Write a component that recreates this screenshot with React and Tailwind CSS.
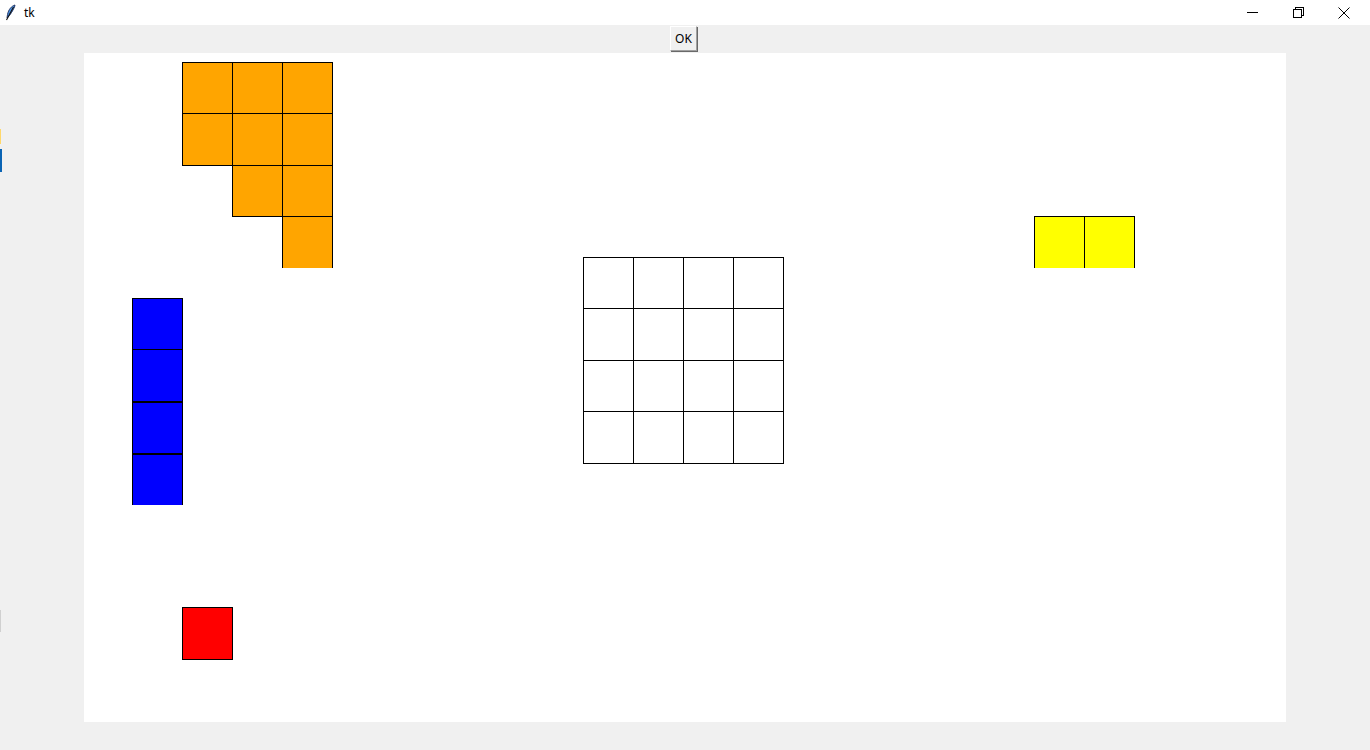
import React from 'react';

// Shapes drawn on the tk canvas, coordinates relative to the canvas origin
const Board = () => (
  <svg width="1202" height="669" viewBox="0 0 1202 669" shapeRendering="crispEdges">
    {/* orange piece */}
    <g fill="#ffa500" stroke="#000" strokeWidth="1">
      <rect x="98.5" y="9.5" width="50" height="51" />
      <rect x="148.5" y="9.5" width="50" height="51" />
      <rect x="198.5" y="9.5" width="50" height="51" />
      <rect x="98.5" y="60.5" width="50" height="52" />
      <rect x="148.5" y="60.5" width="50" height="52" />
      <rect x="198.5" y="60.5" width="50" height="52" />
      <rect x="148.5" y="112.5" width="50" height="51" />
      <rect x="198.5" y="112.5" width="50" height="51" />
    </g>
    <rect x="198" y="163" width="51" height="52" fill="#ffa500" />
    <path d="M198.5 163V215M248.5 163V215M198 163.5H249" stroke="#000" fill="none" />

    {/* blue piece */}
    <g fill="#0000ff" stroke="#000" strokeWidth="1">
      <rect x="48.5" y="245.5" width="50" height="51" />
      <rect x="48.5" y="296.5" width="50" height="53" />
    </g>
    <rect x="48" y="349" width="51" height="103" fill="#0000ff" />
    <path d="M48 349H99M48 401H99" stroke="#000" strokeWidth="2" fill="none" />
    <path d="M48.5 349V452M98.5 349V452" stroke="#000" strokeWidth="1" fill="none" />

    {/* empty 4x4 grid */}
    <g fill="#fff" stroke="#000" strokeWidth="1">
      {[204, 255, 307, 358].map((y, r) =>
        [499, 549, 599, 649].map((x) => (
          <rect key={`${x}-${y}`} x={x + 0.5} y={y + 0.5} width="50" height={[51, 52, 51, 52][r]} />
        ))
      )}
    </g>

    {/* yellow piece */}
    <rect x="950" y="163" width="101" height="52" fill="#ffff00" />
    <path d="M950.5 163V215M1000.5 163V215M1050.5 163V215M950 163.5H1051" stroke="#000" fill="none" />

    {/* red piece */}
    <rect x="98.5" y="554.5" width="50" height="52" fill="#ff0000" stroke="#000" />
  </svg>
);

const Feather = () => (
  <svg width="11" height="17" viewBox="0 0 11 17">
    <path d="M10 1C6.5 2 3.5 5.5 2.5 10.5L2 14C3.5 13 7 8.5 9.5 3Z" fill="#4a90e2" stroke="#1a2a5a" strokeWidth="0.9" />
    <path d="M8.5 3L1.5 16" stroke="#111" strokeWidth="1.1" />
  </svg>
);

export default function App() {
  return (
    <div className="w-[1370px] h-[750px] bg-[#f0f0f0] flex flex-col overflow-hidden relative" style={{ fontFamily: '"Noto Sans", "Liberation Sans", sans-serif' }}>
      {/* title bar */}
      <div className="h-[25px] bg-white flex items-center shrink-0">
        <div className="pl-[5px] pr-[8px] flex items-center"><Feather /></div>
        <span className="text-[12px] text-black leading-none">tk</span>
        <div className="ml-auto flex items-center h-full pr-[3px]">
          <div className="w-[46px] h-full flex items-center justify-center">
            <div className="w-[11px] h-px bg-black" />
          </div>
          <div className="w-[46px] h-full flex items-center justify-center">
            <svg width="11" height="11" viewBox="0 0 11 11" shapeRendering="crispEdges">
              <rect x="0.5" y="2.5" width="8" height="8" fill="none" stroke="#000" />
              <path d="M2.5 2.5V0.5H10.5V8.5H8.5" fill="none" stroke="#000" />
            </svg>
          </div>
          <div className="w-[46px] h-full flex items-center justify-center">
            <svg width="12" height="12" viewBox="0 0 12 12">
              <path d="M0.5 0.5L11.5 11.5M11.5 0.5L0.5 11.5" stroke="#000" strokeWidth="1" />
            </svg>
          </div>
        </div>
      </div>

      {/* left edge artifacts */}
      <div className="absolute left-0 top-[129px] w-px h-[15px] bg-[#ffd86b]" />
      <div className="absolute left-0 top-[149px] w-[2px] h-[23px] bg-[#0a64b4]" />
      <div className="absolute left-0 top-[610px] w-px h-[22px] bg-[#d0d0d0]" />

      {/* OK button */}
      <div className="flex justify-center pt-[1px]">
        <button className="w-[27px] h-[25px] mr-[3px] bg-[#f0f0f0] border border-t-white border-l-white border-r-[#a0a0a0] border-b-[#a0a0a0] shadow-[1px_1px_0_#696969] text-[12px] text-black leading-none flex items-center justify-center">
          OK
        </button>
      </div>

      {/* canvas */}
      <div className="flex justify-center pt-[2px]">
        <div className="w-[1202px] h-[669px] bg-white">
          <Board />
        </div>
      </div>
    </div>
  );
}
